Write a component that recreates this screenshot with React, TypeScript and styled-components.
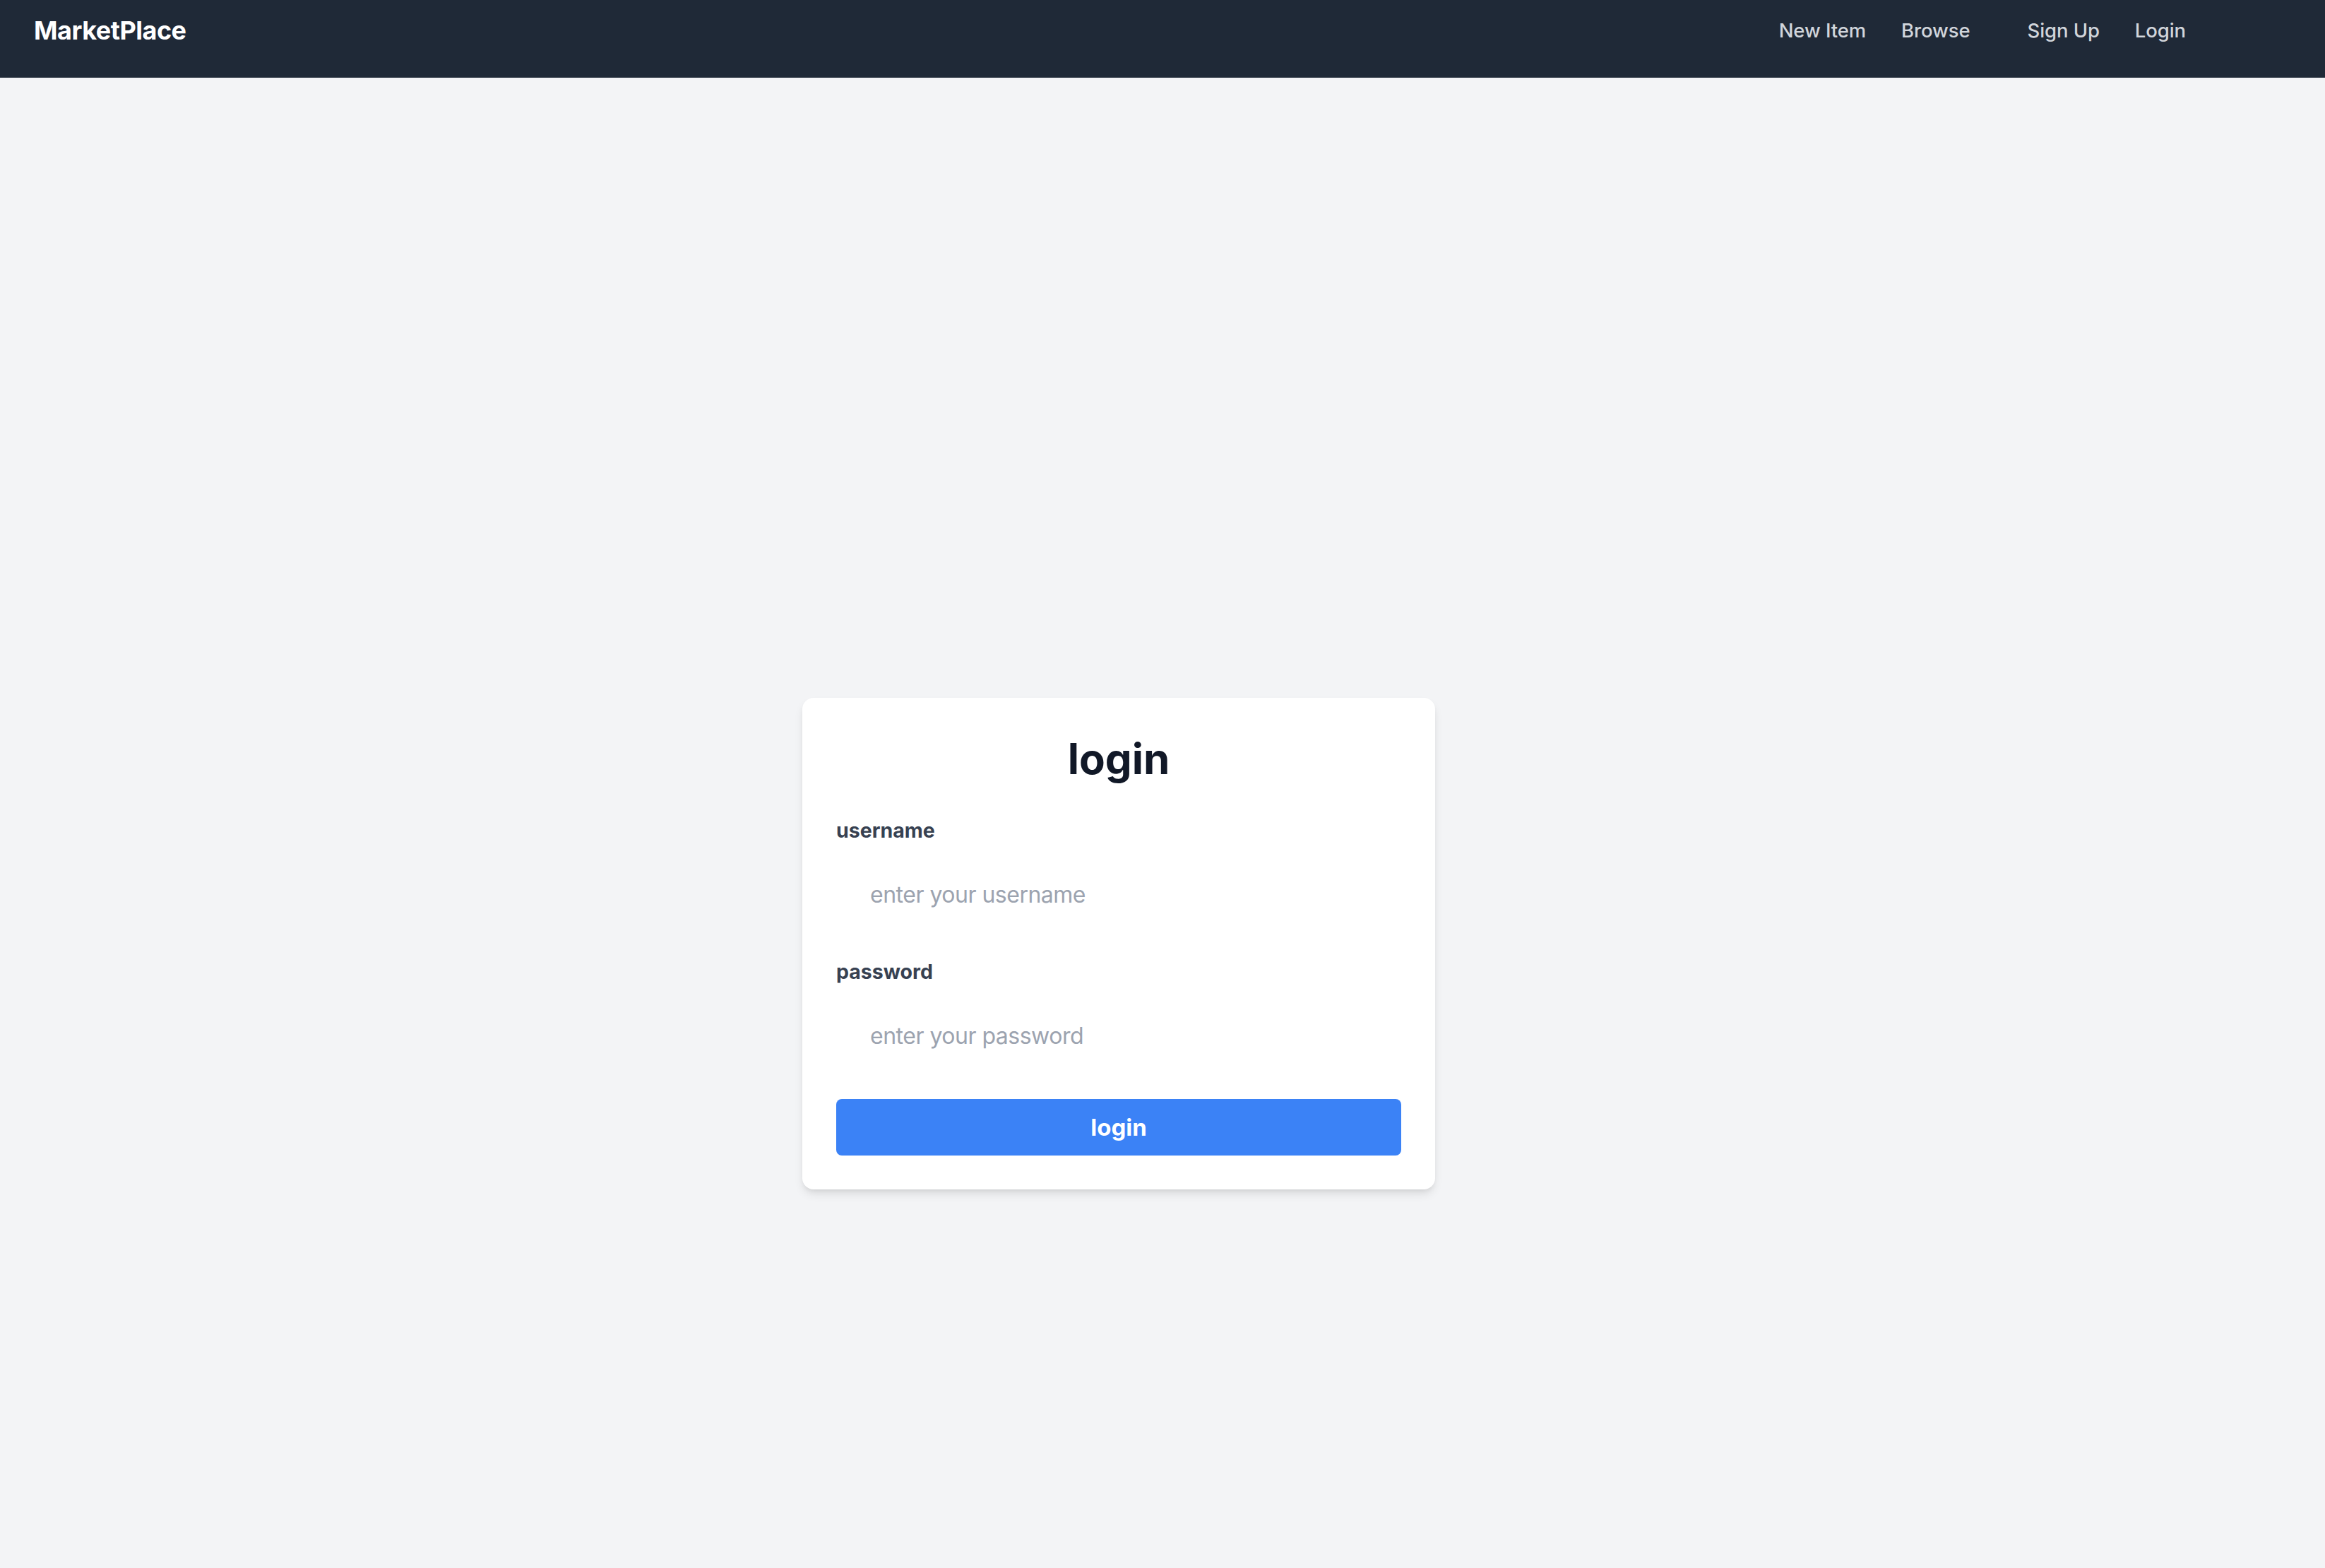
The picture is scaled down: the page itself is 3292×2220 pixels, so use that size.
import React from "react";
import styled, { createGlobalStyle } from "styled-components";

const GlobalStyle = createGlobalStyle`
  html, body {
    margin: 0;
    padding: 0;
    background: #f3f4f6;
    font-family: Inter, "Noto Sans", "Liberation Sans", sans-serif;
  }
  * { box-sizing: border-box; }
`;

const Page = styled.div`
  min-height: 100vh;
  display: flex;
  flex-direction: column;
  background: #f3f4f6;
`;

const NavBar = styled.nav`
  height: 110px;
  background: #1f2937;
  display: flex;
  align-items: flex-start;
  justify-content: space-between;
  padding: 0 197px 0 48px;
  flex-shrink: 0;
`;

const Brand = styled.a`
  color: #ffffff;
  font-size: 36px;
  font-weight: 700;
  letter-spacing: -0.5px;
  text-decoration: none;
  line-height: 36px;
  margin-top: 25px;
`;

const NavGroups = styled.div`
  display: flex;
  align-items: center;
  gap: 81px;
  margin-top: 29px;
`;

const NavGroup = styled.div`
  display: flex;
  align-items: center;
  gap: 50px;
`;

const NavLink = styled.a`
  color: #d1d5db;
  font-size: 27.5px;
  font-weight: 500;
  letter-spacing: -0.1px;
  text-decoration: none;
  line-height: 28px;
`;

const Main = styled.main`
  display: flex;
  justify-content: center;
  padding: 878px 124px 80px 0;
`;

const Card = styled.form`
  width: 896px;
  background: #ffffff;
  border-radius: 16px;
  padding: 48px;
  box-shadow: 0 8px 14px -2px rgba(0, 0, 0, 0.1), 0 4px 8px -4px rgba(0, 0, 0, 0.1);
  display: flex;
  flex-direction: column;
`;

const Title = styled.h1`
  margin: 0 0 43px;
  text-align: center;
  color: #111827;
  font-size: 60px;
  font-weight: 700;
  line-height: 76px;
`;

const Field = styled.div`
  display: flex;
  flex-direction: column;
  margin-bottom: 29px;
`;

const Label = styled.label`
  color: #374151;
  font-size: 28.5px;
  font-weight: 700;
  line-height: 42px;
  margin-bottom: 8px;
`;

const Input = styled.input`
  border: none;
  outline: none;
  background: transparent;
  font-family: inherit;
  font-size: 32px;
  letter-spacing: -0.5px;
  line-height: 50px;
  height: 121px;
  padding: 36px 48px 35px;
  color: #111827;
  &::placeholder {
    color: #9ca3af;
  }
`;

const SubmitButton = styled.button`
  height: 80px;
  border: none;
  border-radius: 8px;
  background: #3b82f6;
  color: #ffffff;
  font-family: inherit;
  font-size: 33px;
  font-weight: 700;
  display: flex;
  align-items: center;
  justify-content: center;
  cursor: pointer;
  margin-top: 1px;
`;

export default function App() {
  return (
    <Page>
      <GlobalStyle />
      <NavBar>
        <Brand href="#">MarketPlace</Brand>
        <NavGroups>
          <NavGroup>
            <NavLink href="#">New Item</NavLink>
            <NavLink href="#">Browse</NavLink>
          </NavGroup>
          <NavGroup>
            <NavLink href="#">Sign Up</NavLink>
            <NavLink href="#">Login</NavLink>
          </NavGroup>
        </NavGroups>
      </NavBar>
      <Main>
        <Card onSubmit={(e) => e.preventDefault()}>
          <Title>login</Title>
          <Field>
            <Label htmlFor="username">username</Label>
            <Input id="username" type="text" placeholder="enter your username" />
          </Field>
          <Field>
            <Label htmlFor="password">password</Label>
            <Input id="password" type="password" placeholder="enter your password" />
          </Field>
          <SubmitButton type="submit">login</SubmitButton>
        </Card>
      </Main>
    </Page>
  );
}
